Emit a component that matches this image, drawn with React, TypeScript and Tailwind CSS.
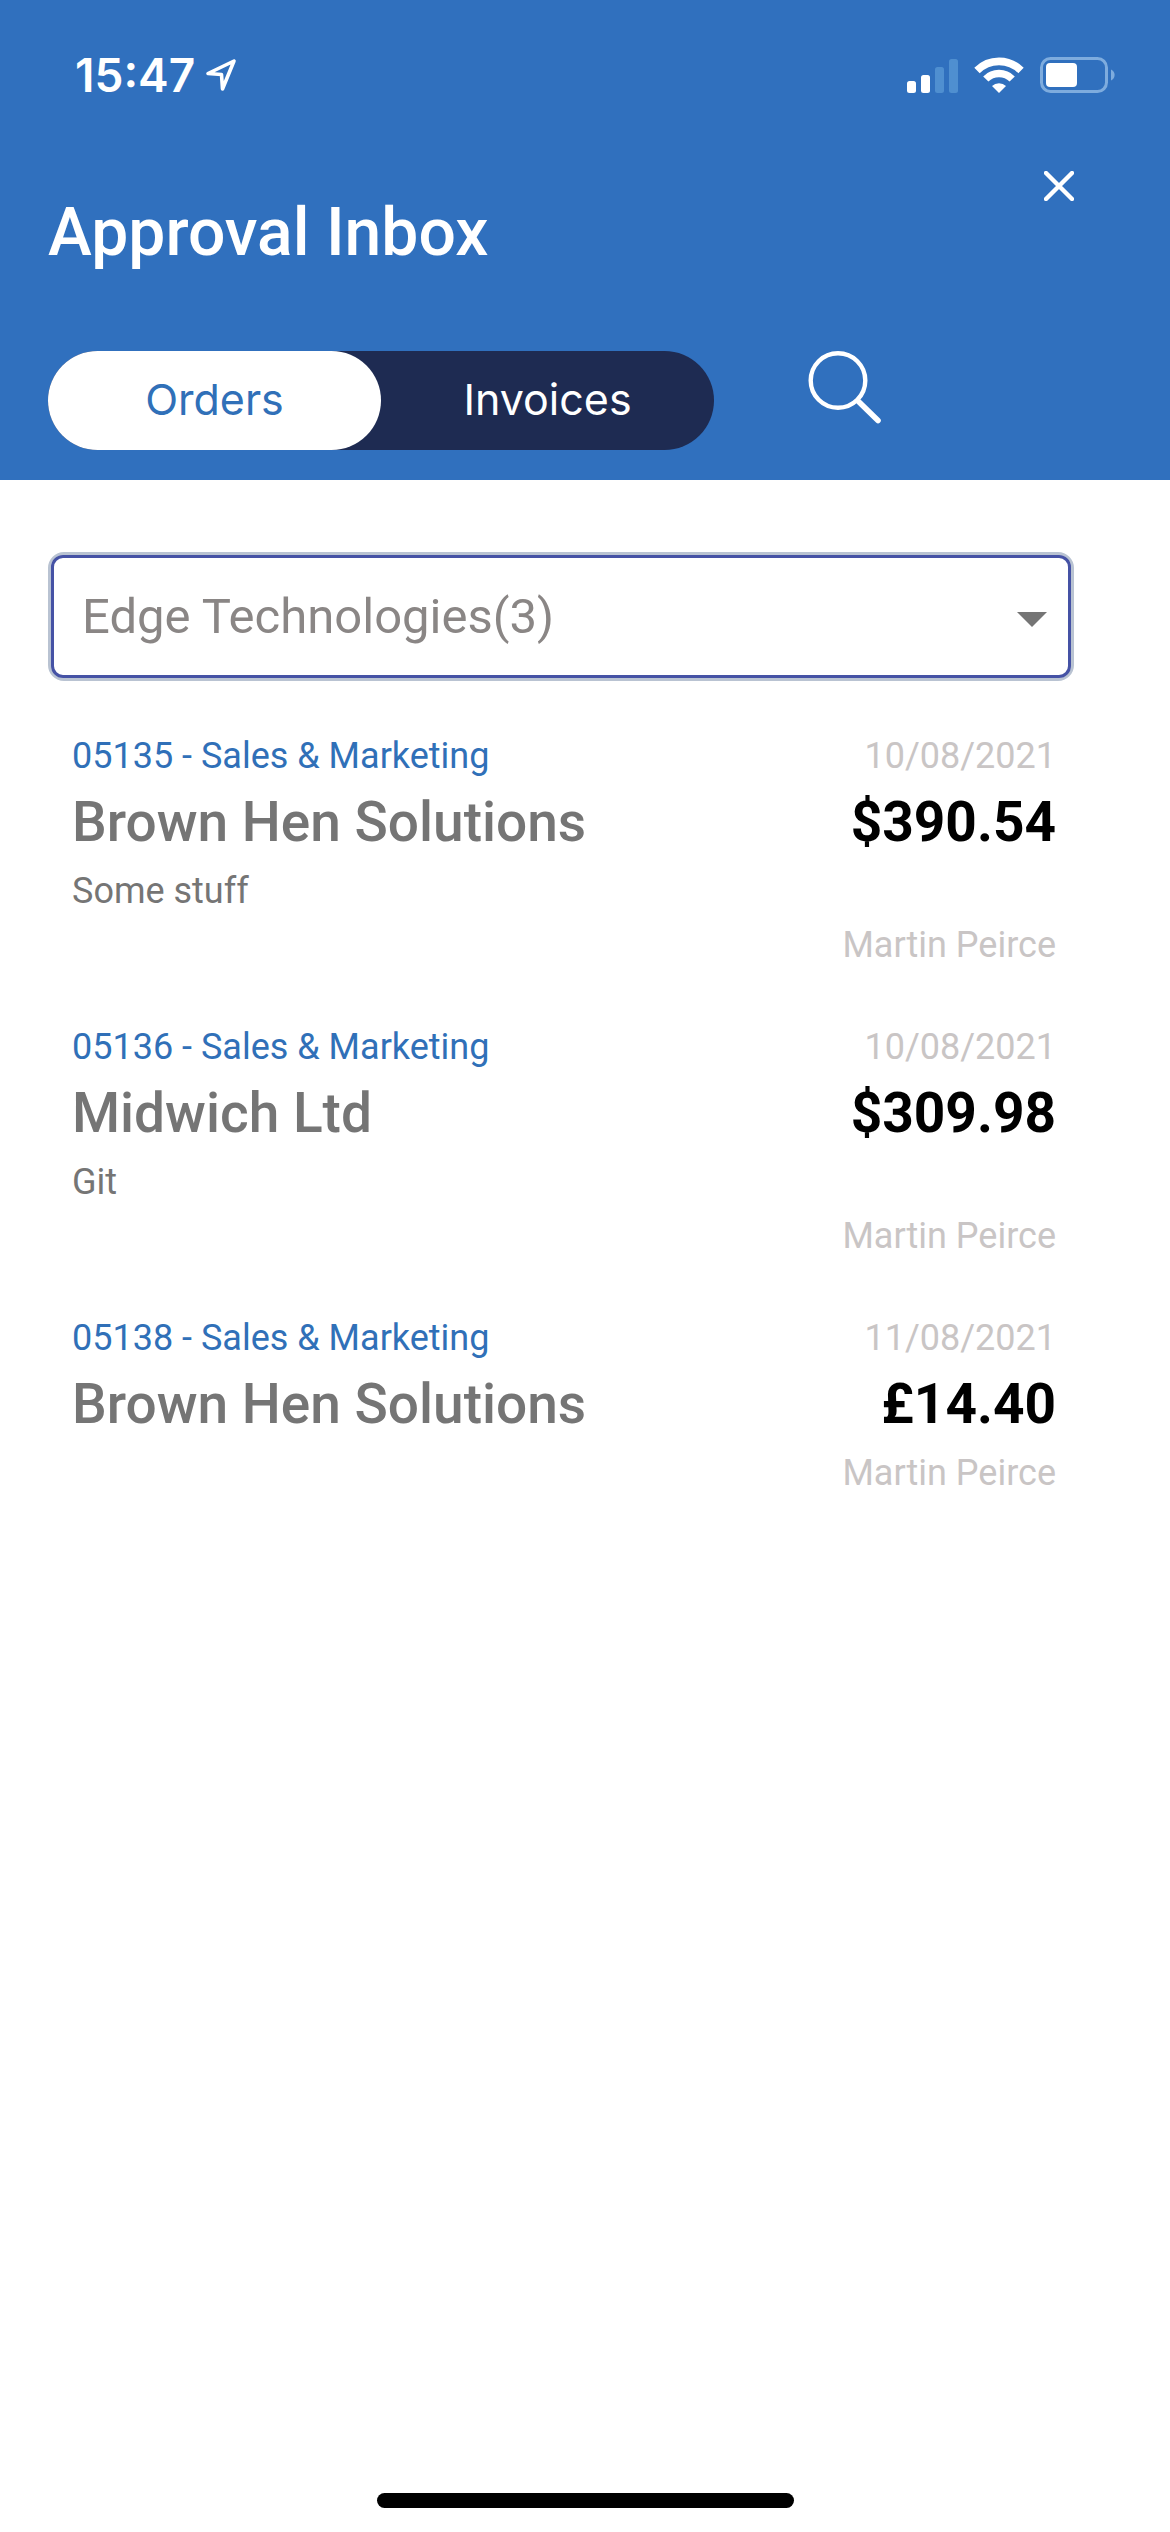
import React, { useState } from "react";
import clsx from "clsx";

type Order = {
  id: string;
  department: string;
  supplier: string;
  description?: string;
  date: string;
  amount: string;
  approver: string;
};

const orders: Order[] = [
  {
    id: "05135",
    department: "Sales & Marketing",
    supplier: "Brown Hen Solutions",
    description: "Some stuff",
    date: "10/08/2021",
    amount: "$390.54",
    approver: "Martin Peirce",
  },
  {
    id: "05136",
    department: "Sales & Marketing",
    supplier: "Midwich Ltd",
    description: "Git",
    date: "10/08/2021",
    amount: "$309.98",
    approver: "Martin Peirce",
  },
  {
    id: "05138",
    department: "Sales & Marketing",
    supplier: "Brown Hen Solutions",
    date: "11/08/2021",
    amount: "£14.40",
    approver: "Martin Peirce",
  },
];

const tabs = ["Orders", "Invoices"];

const StatusBar = () => (
  <div className="flex items-center justify-between pl-[75px] pr-[54px] pt-12 font-[Inter,sans-serif]">
    <div className="flex items-center gap-2.5">
      <span className="text-[46px] leading-[54px] font-semibold">15:47</span>
      <svg width="32" height="34" viewBox="0 0 32 34" fill="none" aria-hidden="true">
        <path
          d="M29 3 L3 15.500 L16.500 16.500 L17.500 31 Z"
          stroke="white"
          strokeWidth="3.600"
          strokeLinejoin="round"
        />
      </svg>
    </div>

    <div className="flex items-center gap-4">
      <svg width="51" height="36" viewBox="0 0 51 36" aria-hidden="true">
        <rect x="0" y="24" width="9" height="12" rx="2.500" fill="white" />
        <rect x="14" y="18" width="9" height="18" rx="2.500" fill="white" />
        <rect x="28" y="10" width="9" height="26" rx="2.500" fill="#4f8fd0" />
        <rect x="42" y="2" width="9" height="34" rx="2.500" fill="#4f8fd0" />
      </svg>
      <svg width="50" height="36" viewBox="0 0 50 36" fill="none" aria-hidden="true">
        <path d="M3 13.500 A31 31 0 0 1 47 13.500" stroke="white" strokeWidth="7.600" />
        <path d="M11.800 22 A18.700 18.700 0 0 1 38.200 22" stroke="white" strokeWidth="7.400" />
        <path d="M18 29 A10 10 0 0 1 32 29 L25 36 Z" fill="white" />
      </svg>
      <svg width="76" height="36" viewBox="0 0 76 36" fill="none" aria-hidden="true">
        <rect x="1.500" y="1.500" width="65" height="33" rx="9" stroke="#7eacde" strokeWidth="3" />
        <rect x="6" y="6" width="31" height="24" rx="4" fill="white" />
        <path d="M71 12.500 A6 6 0 0 1 71 23.500 Z" fill="#7eacde" />
      </svg>
    </div>
  </div>
);

const OrderRow = ({ order }: { order: Order }) => (
  <li className="flex justify-between gap-6 pb-12 text-4xl">
    <div>
      <p className="leading-[54px] text-[#3070b8]">
        {order.id} - {order.department}
      </p>
      <h2 className="pb-[3px] text-[55px] leading-[78px] font-medium text-[#757575]">{order.supplier}</h2>
      {order.description && <p className="leading-[54px] text-[#757575]">{order.description}</p>}
    </div>
    <div className="text-right text-[#c9c5c5]">
      <p className="leading-[54px]">{order.date}</p>
      <p className="pb-[3px] text-[55px] leading-[78px] font-bold text-black">{order.amount}</p>
      <p className={clsx("leading-[54px]", order.description && "pt-[54px]")}>{order.approver}</p>
    </div>
  </li>
);

export default function App() {
  const [activeTab, setActiveTab] = useState("Orders");

  return (
    <div className="flex min-h-screen flex-col bg-white font-[Roboto,sans-serif]">
      <header className="bg-[#3070be] pb-[30px] text-white">
        <StatusBar />

        <div className="flex items-start justify-between pl-12 pr-24 pt-[69px]">
          <h1 className="pt-[21px] text-[66px] leading-[81px] font-medium">Approval Inbox</h1>
          <button type="button" aria-label="Close">
            <svg width="30" height="30" viewBox="0 0 30 30" fill="none" aria-hidden="true">
              <path d="M2 2 L28 28 M28 2 L2 28" stroke="white" strokeWidth="4.400" strokeLinecap="round" />
            </svg>
          </button>
        </div>

        <div className="flex items-start gap-[94px] px-12 pt-[78px] font-[Inter,sans-serif]">
          <div className="flex rounded-full bg-[#1e2b52]">
            {tabs.map((tab) => (
              <button
                key={tab}
                type="button"
                aria-pressed={activeTab === tab}
                onClick={() => setActiveTab(tab)}
                className={clsx(
                  "h-[99px] w-[333px] rounded-full pb-[3px] text-[43px]",
                  activeTab === tab ? "bg-white text-[#3070b8]" : "text-white"
                )}
              >
                {tab}
              </button>
            ))}
          </div>
          <button type="button" aria-label="Search">
            <svg width="74" height="74" viewBox="0 0 74 74" fill="none" aria-hidden="true">
              <circle cx="30" cy="29.500" r="27.300" stroke="white" strokeWidth="4.400" />
              <path d="M50 50 L70 69.500" stroke="white" strokeWidth="5.600" strokeLinecap="round" />
            </svg>
          </button>
        </div>
      </header>

      <main className="pl-12 pr-24 pt-[72px]">
        <div className="relative rounded-2xl border-3 border-[#b9c3d2]">
          <select
            aria-label="Company"
            className="block h-[123px] w-full appearance-none rounded-xl border-3 border-[#4552a5] bg-white px-7 text-[49px] leading-[72px] text-[#8a8685] outline-none"
          >
            <option>Edge Technologies(3)</option>
          </select>
          <svg
            className="pointer-events-none absolute right-6 top-[57px]"
            width="30"
            height="15"
            viewBox="0 0 30 15"
            aria-hidden="true"
          >
            <path d="M0 0 H30 L15 15 Z" fill="#757575" />
          </svg>
        </div>

        <ul className="pl-6 pr-[18px] pt-12">
          {orders.map((order) => (
            <OrderRow key={order.id} order={order} />
          ))}
        </ul>
      </main>

      {/* Home indicator */}
      <div className="mt-auto flex justify-center pb-6">
        <div className="h-[15px] w-[417px] rounded-full bg-black" />
      </div>
    </div>
  );
}
